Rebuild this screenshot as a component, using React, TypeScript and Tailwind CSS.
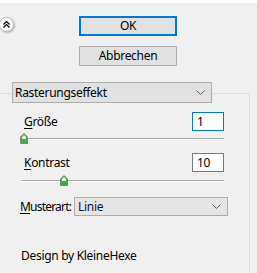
import React from "react";

const font = { fontFamily: '"Noto Sans", "Open Sans", sans-serif' };

function Chevron({ className }: { className?: string }) {
  return (
    <svg width="9" height="5" viewBox="0 0 9 5" className={className}>
      <path d="M0.5 0.5 L4.5 4.5 L8.5 0.5" fill="none" stroke="#606060" strokeWidth="1" />
    </svg>
  );
}

function Thumb() {
  return (
    <svg width="8" height="11" viewBox="0 0 8 11">
      <path d="M4 0.5 L7.5 4 L7.5 10.5 L0.5 10.5 L0.5 4 Z" fill="#3fae4a" stroke="#7a8a7a" strokeWidth="1" />
      <path d="M4 2 L6 4 L6 6 L2 6 L2 4 Z" fill="#e8f5e8" />
    </svg>
  );
}

function Slider({ pos }: { pos: number }) {
  return (
    <div className="relative h-[11px] ml-[21px] w-[203px]">
      <div className="absolute left-0 right-0 top-[5px] h-[1px] bg-[#a9a9a9]" />
      <div className="absolute left-0 right-0 top-[6px] h-[1px] bg-white" />
      <div className="absolute top-0" style={{ left: pos }}>
        <Thumb />
      </div>
    </div>
  );
}

function Label({ first, rest }: { first: string; rest: string }) {
  return (
    <span>
      <span className="underline underline-offset-2">{first}</span>
      {rest}
    </span>
  );
}

export default function App() {
  return (
    <div style={font} className="w-[257px] h-[273px] bg-[#f0f0f0] text-[12px] tracking-[-0.3px] text-black overflow-hidden leading-[16px]">
      <div className="h-[3px] bg-white" />
      <div className="flex mt-[13px]">
        <div className="mt-[1px] -ml-[1px] w-[15px] h-[15px] rounded-full bg-white border border-[#b9b9b9] shadow-[1px_1px_2px_rgba(0,0,0,0.25)] flex items-center justify-center">
          <svg width="7" height="7" viewBox="0 0 7 7">
            <path d="M0.5 3.5 L3.5 0.5 L6.5 3.5 M0.5 6.5 L3.5 3.5 L6.5 6.5" fill="none" stroke="#000" strokeWidth="1.2" />
          </svg>
        </div>
        <div className="ml-[65px] flex flex-col gap-[10px]">
          <div className="w-[98px] h-[20px] border-2 border-[#0078d7] bg-[#e1e1e1] flex items-center justify-center">OK</div>
          <div className="w-[98px] h-[20px] border border-[#adadad] bg-[#e1e1e1] flex items-center justify-center">Abbrechen</div>
        </div>
      </div>

      <div className="relative z-10 mt-[16px] ml-[12px] w-[200px] h-[21px] border border-[#adadad] bg-[#e1e1e1] flex items-center justify-between pl-[2px] pr-[6px]">
        <span>Rasterungseffekt</span>
        <Chevron />
      </div>

      <div className="-mt-[10px] w-[250px] h-[200px] border-t border-r border-[#dcdcdc]">
        <div className="mt-[18px] flex items-center justify-between pl-[24px] pr-[25px]">
          <Label first="G" rest="röße" />
          <div className="w-[32px] h-[19px] border border-[#0078d7] bg-white pl-[4px] flex items-center">1</div>
        </div>
        <div className="mt-[2px]">
          <Slider pos={-1} />
        </div>
        <div className="mt-[9px] flex items-center justify-between pl-[24px] pr-[25px]">
          <Label first="K" rest="ontrast" />
          <div className="w-[32px] h-[19px] border border-[#7a7a7a] bg-white pl-[4px] flex items-center">10</div>
        </div>
        <div className="mt-[3px]">
          <Slider pos={39} />
        </div>
        <div className="mt-[11px] flex items-center pl-[20px]">
          <div className="w-[54px] flex-none whitespace-nowrap tracking-[-0.8px]">
            <Label first="M" rest="usterart:" />
          </div>
          <div className="w-[154px] h-[19px] border border-[#adadad] bg-[#e5e5e5] flex items-center justify-between pl-[3px] pr-[6px] text-[#10103a]">
            <span>Linie</span>
            <Chevron />
          </div>
        </div>
        <div className="mt-[32px] pl-[21px]">Design by KleineHexe</div>
      </div>
    </div>
  );
}
